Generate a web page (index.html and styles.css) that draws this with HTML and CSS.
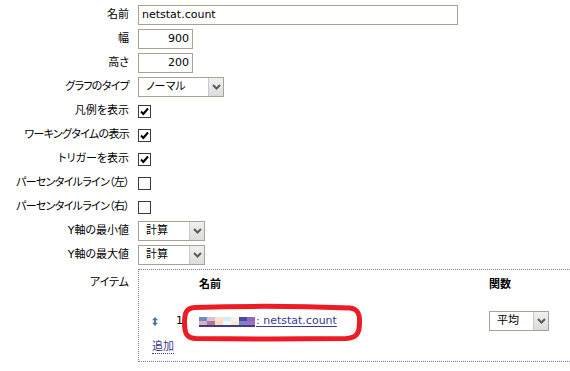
FILE: index.html
```html
<!DOCTYPE html>
<html lang="ja">
<head>
<meta charset="utf-8">
<title>グラフ設定</title>
<link rel="stylesheet" href="styles.css">
</head>
<body>
<form class="form">
  <div class="row">
    <label class="lbl">名前</label>
    <div class="fld"><span class="input input-name">netstat.count</span></div>
  </div>
  <div class="row">
    <label class="lbl">幅</label>
    <div class="fld"><span class="input input-num">900</span></div>
  </div>
  <div class="row">
    <label class="lbl">高さ</label>
    <div class="fld"><span class="input input-num">200</span></div>
  </div>
  <div class="row">
    <label class="lbl lbl-kana">グラフのタイプ</label>
    <div class="fld"><span class="select sel-type"><span class="sel-text">ノーマル</span><span class="sel-btn"><svg width="9" height="6" viewBox="0 0 9 6"><path d="M1 1 L4.5 4.5 L8 1" fill="none" stroke="#5a5a5a" stroke-width="2"/></svg></span></span></div>
  </div>
  <div class="row">
    <label class="lbl">凡例を表示</label>
    <div class="fld"><span class="cb"><svg width="11" height="11" viewBox="0 0 11 11"><path d="M2 5.5 L4.3 8 L9 2.5" fill="none" stroke="#000" stroke-width="2"/></svg></span></div>
  </div>
  <div class="row">
    <label class="lbl lbl-kana">ワーキングタイムの表示</label>
    <div class="fld"><span class="cb"><svg width="11" height="11" viewBox="0 0 11 11"><path d="M2 5.5 L4.3 8 L9 2.5" fill="none" stroke="#000" stroke-width="2"/></svg></span></div>
  </div>
  <div class="row">
    <label class="lbl">トリガーを表示</label>
    <div class="fld"><span class="cb"><svg width="11" height="11" viewBox="0 0 11 11"><path d="M2 5.5 L4.3 8 L9 2.5" fill="none" stroke="#000" stroke-width="2"/></svg></span></div>
  </div>
  <div class="row">
    <label class="lbl lbl-kana">パーセンタイルライン（左）</label>
    <div class="fld"><span class="cb"></span></div>
  </div>
  <div class="row">
    <label class="lbl lbl-kana">パーセンタイルライン（右）</label>
    <div class="fld"><span class="cb"></span></div>
  </div>
  <div class="row">
    <label class="lbl">Y軸の最小値</label>
    <div class="fld"><span class="select sel-y"><span class="sel-text">計算</span><span class="sel-btn"><svg width="9" height="6" viewBox="0 0 9 6"><path d="M1 1 L4.5 4.5 L8 1" fill="none" stroke="#5a5a5a" stroke-width="2"/></svg></span></span></div>
  </div>
  <div class="row">
    <label class="lbl">Y軸の最大値</label>
    <div class="fld"><span class="select sel-y"><span class="sel-text">計算</span><span class="sel-btn"><svg width="9" height="6" viewBox="0 0 9 6"><path d="M1 1 L4.5 4.5 L8 1" fill="none" stroke="#5a5a5a" stroke-width="2"/></svg></span></span></div>
  </div>
  <div class="row row-items">
    <label class="lbl lbl-top">アイテム</label>
    <div class="items">
      <div class="items-grid">
        <span></span><span></span>
        <span class="th">名前</span>
        <span class="th">関数</span>
        <span class="drag"><svg width="6" height="9" viewBox="0 0 6 9"><path d="M3 0 L6 3.2 L0 3.2 Z M3 9 L0 5.8 L6 5.8 Z M2 3 h2 v3 h-2 Z" fill="#4677a8"/></svg></span>
        <span class="num">1</span>
        <span class="name-cell">
          <a class="item-link"><span class="mosaic"><i class="m1"></i><i class="m2"></i><i class="m3"></i><i class="m4"></i><i class="m5"></i><i class="m6"></i><i class="m7"></i><i class="m9"></i><i class="m10"></i><i class="m11"></i><i class="m12"></i><i class="m13"></i><i class="m14"></i><i class="m15"></i></span>: netstat.count</a>
          <svg class="annot" width="186" height="42" viewBox="0 0 186 42"><path d="M15 4.5 C60 3 130 3.5 170 5 C178 6 180 11 179.5 20 C179.5 31 176 35 166 35.5 C120 36 60 36 16 35.5 C7 35 4.5 31 4.5 20 C4.5 10 6 5 15 4.5 Z" fill="none" stroke="#ed1c24" stroke-width="5"/></svg>
        </span>
        <span class="fn-cell"><span class="select sel-fn"><span class="sel-text">平均</span><span class="sel-btn"><svg width="9" height="6" viewBox="0 0 9 6"><path d="M1 1 L4.5 4.5 L8 1" fill="none" stroke="#5a5a5a" stroke-width="2"/></svg></span></span></span>
      </div>
      <a class="add">追加</a>
    </div>
  </div>
</form>
</body>
</html>
```
FILE: styles.css
```css
html, body {
  margin: 0;
  padding: 0;
  background: #fff;
  overflow: hidden;
}
body {
  font-family: "DejaVu Sans", "Noto Sans CJK JP", sans-serif;
  font-size: 11px;
  color: #000;
  font-feature-settings: "palt";
}
.form {
  padding-top: 3px;
  display: flex;
  flex-direction: column;
}
.row {
  display: grid;
  grid-template-columns: 129px 1fr;
  column-gap: 9px;
  height: 24px;
  align-items: center;
}
.lbl {
  text-align: right;
  white-space: nowrap;
  line-height: 14px;
}
.lbl-kana {
  letter-spacing: -0.7px;
}
.fld {
  display: flex;
  align-items: center;
}
.input {
  box-sizing: border-box;
  height: 20px;
  border: 1px solid #a6a595;
  display: flex;
  align-items: center;
  padding: 0 3px;
  line-height: 14px;
  background: #fff;
}
.input-name { width: 320px; }
.input-num { width: 55px; justify-content: flex-end; }
.select {
  box-sizing: border-box;
  height: 20px;
  border: 1px solid #a6a595;
  display: flex;
  align-items: stretch;
  background: #fff;
}
.sel-text {
  flex: 1;
  display: flex;
  align-items: center;
  padding-left: 7px;
  line-height: 14px;
}
.sel-btn {
  width: 15px;
  box-sizing: border-box;
  border-left: 1px solid #c9c9c9;
  background: linear-gradient(#f0f0f0, #dcdcdc);
  display: flex;
  align-items: center;
  justify-content: center;
}
.sel-type { width: 86px; }
.sel-y { width: 67px; }
.sel-fn { width: 60px; }
.cb {
  box-sizing: border-box;
  width: 13px;
  height: 13px;
  border: 1px solid #3a3a3a;
  background: #fff;
  display: flex;
  align-items: center;
  justify-content: center;
}
.row-items {
  height: auto;
  align-items: start;
  margin-top: 2px;
}
.lbl-top {
  padding-top: 7px;
}
.items {
  border-style: dotted;
  border-color: #6f7fb8;
  border-width: 1px 0 1px 1px;
  padding: 8px 0 12px 13px;
  height: 93px;
  box-sizing: border-box;
}
.items-grid {
  display: grid;
  grid-template-columns: 24px 23px 290px auto;
  row-gap: 19px;
  align-items: center;
}
.th {
  font-weight: bold;
  line-height: 14px;
}
.drag {
  display: flex;
  align-items: center;
}
.num {
  line-height: 14px;
}
.name-cell {
  position: relative;
  display: flex;
  align-items: center;
}
.item-link {
  color: #3b3a8c;
  text-decoration: underline;
  text-underline-offset: 2px;
  line-height: 14px;
  display: inline-flex;
  align-items: center;
}
.mosaic {
  display: inline-grid;
  grid-template-columns: repeat(7, 8px);
  grid-template-rows: 4px 4px;
  margin-right: 1px;
  border-bottom: 2px solid #3b3a8c;
  margin-top: 2px;
}
.mosaic i { display: block; }
.m1 { background: #6f88c8; }
.m2 { background: #d8c0d8; }
.m3 { background: #ffe0cc; }
.m4 { background: #cfefff; }
.m5 { background: #fff4e8; }
.m6 { background: #4a4aa0; }
.m7 { background: #8a6ac0; }
.m9 { background: #e0b0c0; }
.m10 { background: #b07890; }
.m11 { background: #ffd8c0; }
.m12 { background: #f0f8ff; }
.m13 { background: #ffe8d0; }
.m14 { background: #8080c8; }
.m15 { background: #a070c0; }
.annot {
  position: absolute;
  left: -19px;
  top: -11px;
}
.fn-cell {
  display: flex;
}
.add {
  display: inline-block;
  margin-top: 9px;
  color: #3b3a8c;
  line-height: 13px;
  border-bottom: 1px dotted #3b3a8c;
}
```
